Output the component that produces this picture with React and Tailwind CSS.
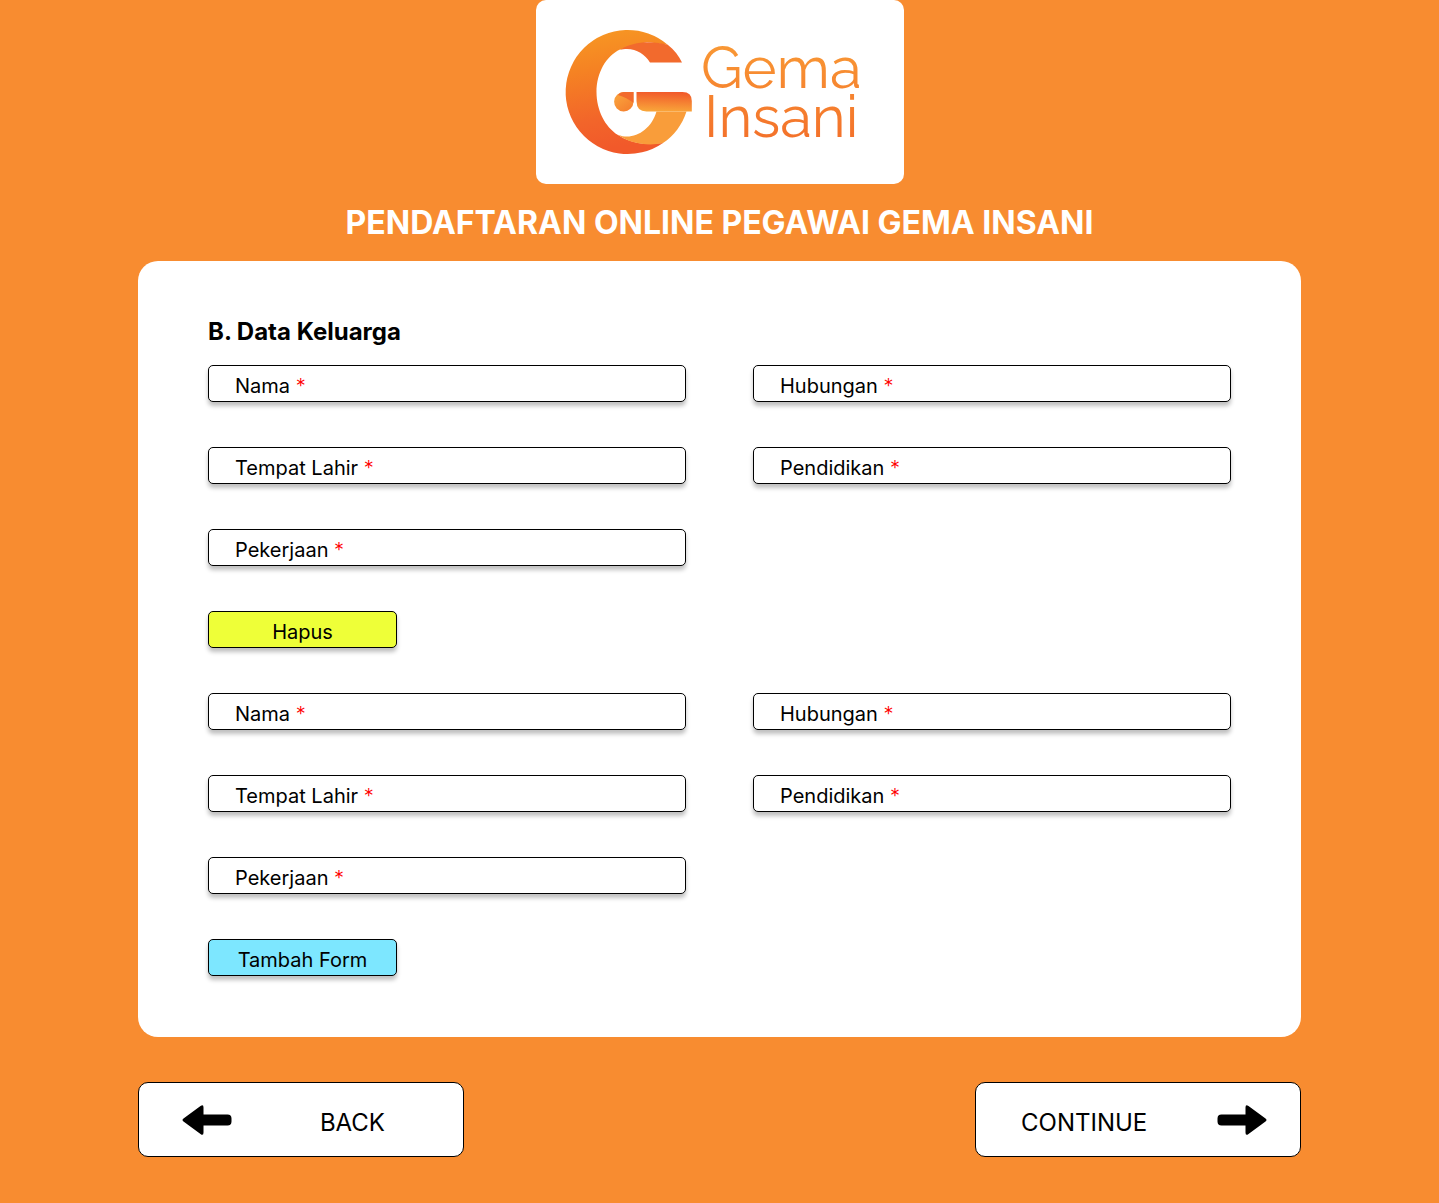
import React from "react";

function Logo() {
  return (
    <svg viewBox="0 0 368 184" className="block w-full" role="img" aria-label="Gema Insani">
      <defs>
        <linearGradient id="ring" x1="0" y1="0" x2="0.15" y2="1">
          <stop offset="0" stopColor="#f79a23" />
          <stop offset="0.35" stopColor="#f58223" />
          <stop offset="0.75" stopColor="#f2652a" />
          <stop offset="1" stopColor="#f1592a" />
        </linearGradient>
        <linearGradient id="bar" x1="0.55" y1="0" x2="0.45" y2="1">
          <stop offset="0" stopColor="#f1592a" />
          <stop offset="1" stopColor="#f9a63a" />
        </linearGradient>
        <linearGradient id="dot" x1="0.2" y1="0.3" x2="0.7" y2="1">
          <stop offset="0" stopColor="#f99d3a" />
          <stop offset="1" stopColor="#f5812f" />
        </linearGradient>
        <linearGradient id="word" gradientUnits="userSpaceOnUse" x1="0" y1="40" x2="0" y2="145">
          <stop offset="0" stopColor="#f99a35" />
          <stop offset="1" stopColor="#f36f2a" />
        </linearGradient>
      </defs>
      <path
        d="M132 45A62 62 0 1 0 127 143L111 144C98 143 90 140 82 135C69 127 60.500 110 60.500 92C60.500 73 70 56 84 49.500L111 42Z"
        fill="url(#ring)"
      />
      <path
        d="M84 49.700C96 41.500 116 40 132 45C138 49.500 143 56 146 62.500H114C109 54.500 101 49 91 49C88.500 49 86 49.200 84 49.700Z"
        fill="#f26a2d"
      />
      <path
        d="M82 134.700C94 143.500 112 146.500 127 143C138 136 146 125 150.500 111.500H120.500C116 127 103.500 136.500 91 136.500C88 136.500 85 136 82 134.700Z"
        fill="#f99d3a"
      />
      <path d="M88 92H97.500V102A9.700 9.700 0 1 1 88 92Z" fill="url(#dot)" />
      <path d="M88 92H97.500V102.800C93 99.500 88 96.500 82 95C83.500 93 85.500 92 88 92Z" fill="#f26a2d" />
      <path d="M100.500 92H146.500Q155.800 92 155.800 101V111.500H110.500Q100.500 111.500 100.500 101Z" fill="url(#bar)" />
      <g fill="url(#word)" fontSize="58" fontWeight="400" fontFamily="Raleway, Lato, sans-serif">
        <text x="165" y="88">Gema</text>
        <text x="168" y="137">Insani</text>
      </g>
    </svg>
  );
}

function Field({ label }) {
  return (
    <label className="flex h-[37px] items-center gap-2 rounded-[5px] border border-black bg-white px-[26px] pt-1 text-xl text-black shadow-[0_4px_4px_rgba(0,0,0,0.25)]">
      <span className="whitespace-nowrap">
        {label} <span className="font-light text-[#ff0000]">*</span>
      </span>
      <input type="text" required className="min-w-0 flex-1 bg-transparent outline-none" />
    </label>
  );
}

function FamilyForm() {
  return (
    <div className="grid grid-cols-2 gap-x-[67px] gap-y-[45px]">
      <Field label="Nama" />
      <Field label="Hubungan" />
      <Field label="Tempat Lahir" />
      <Field label="Pendidikan" />
      <Field label="Pekerjaan" />
    </div>
  );
}

function ArrowRight({ className = "" }) {
  return (
    <svg viewBox="0 0 50 32" className={`h-8 w-[50px] ${className}`} aria-hidden="true">
      <path
        d="M4.500 10.500H28.500V3.500Q28.500 -0.300 31.500 2L48.500 14.500Q50.500 16 48.500 17.500L31.500 30Q28.500 32.300 28.500 28.500V21.500H4.500Q0.500 21.500 0.500 17.500V14.500Q0.500 10.500 4.500 10.500Z"
        fill="#000"
      />
    </svg>
  );
}

const actionClass =
  "block h-[37px] w-[189px] rounded-[5px] border border-black pt-1 text-xl text-black shadow-[0_4px_4px_rgba(0,0,0,0.25)]";
const navClass =
  "flex h-[75px] w-[326px] items-center justify-between rounded-[10px] border border-black bg-white text-2xl text-black";

export default function App() {
  return (
    <div className="min-h-screen bg-[#f88c30] font-['Inter',sans-serif]">
      <div className="mx-auto w-full max-w-[1163px] pb-[46px]">
        <header className="flex flex-col items-center">
          <div className="w-[368px] rounded-[10px] bg-white">
            <Logo />
          </div>
          <h1 className="mt-[19px] text-center text-[32px] leading-10 font-bold text-white">
            PENDAFTARAN ONLINE PEGAWAI GEMA INSANI
          </h1>
        </header>
        <main>
          <form>
            <section className="mt-[18px] rounded-[20px] bg-white px-[70px] pt-[55px] pb-[61px]">
              <h2 className="mb-[17px] text-2xl font-bold text-black">B. Data Keluarga</h2>
              <div className="flex flex-col gap-[45px]">
                <FamilyForm />
                <button type="button" className={`${actionClass} bg-[#eeff38]`}>Hapus</button>
                <FamilyForm />
                <button type="button" className={`${actionClass} bg-[#7de7ff]`}>Tambah Form</button>
              </div>
            </section>
            <nav className="mt-[45px] flex justify-between">
              <button type="button" className={`${navClass} pr-[78px] pl-[43px]`}>
                <ArrowRight className="rotate-180" />
                <span className="pt-1.5">BACK</span>
              </button>
              <button type="button" className={`${navClass} pr-[33px] pl-[45px]`}>
                <span className="pt-1.5">CONTINUE</span>
                <ArrowRight />
              </button>
            </nav>
          </form>
        </main>
      </div>
    </div>
  );
}
